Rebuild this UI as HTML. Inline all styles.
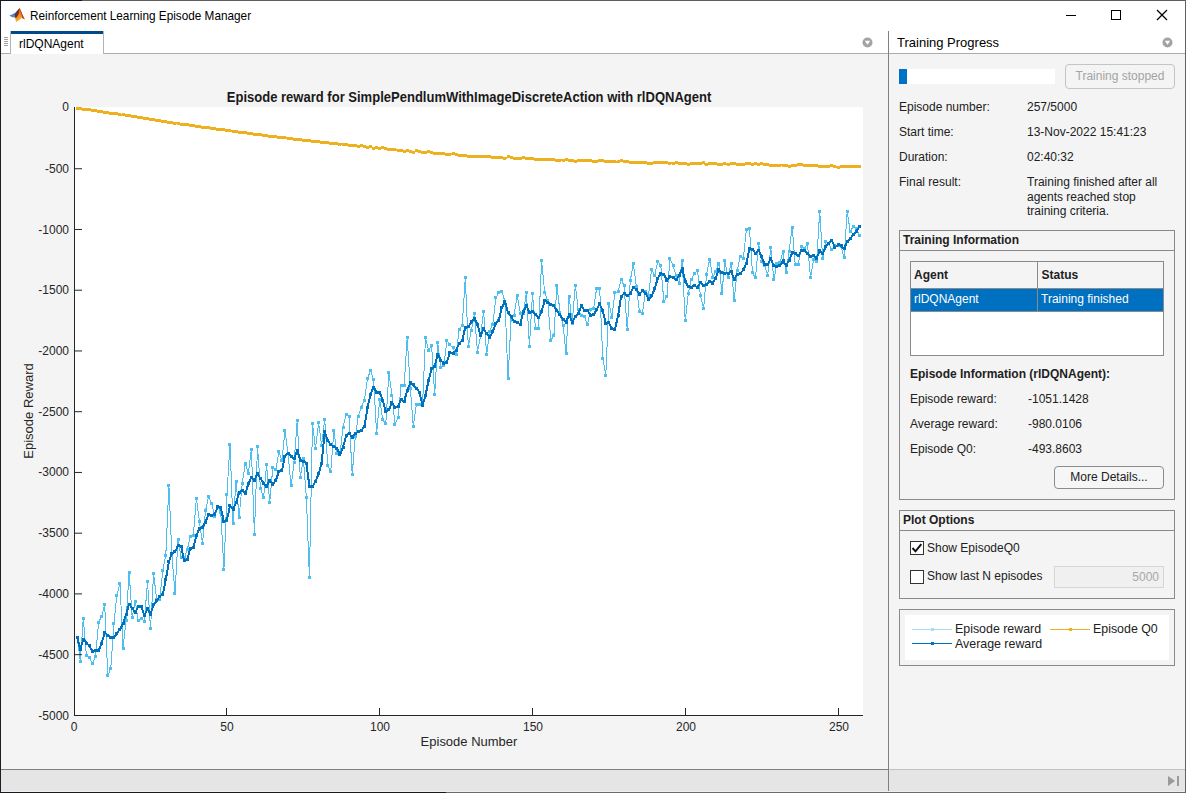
<!DOCTYPE html>
<html><head><meta charset="utf-8">
<style>
*{box-sizing:border-box}
html,body{margin:0;padding:0;width:1186px;height:793px;overflow:hidden;background:#f4f4f4;font-family:"Liberation Sans",sans-serif;color:#1a1a1a}
.a{position:absolute;white-space:nowrap}
#titlebar{position:absolute;left:0;top:0;width:1186px;height:31px;background:#fff}
.lbl{position:absolute;font-size:12px;line-height:14px;white-space:nowrap;color:#212121}
.panel{position:absolute;border:1px solid #8a8a8a}
.phdr{position:absolute;left:0;right:0;top:0;height:20px;border-bottom:1px solid #8a8a8a}
.btn{position:absolute;border:1px solid #8c8c8c;border-radius:4px;background:#f6f6f6;font-size:12px;text-align:center}
</style></head>
<body>
<!-- window border -->
<div class="a" style="left:0;top:0;width:1186px;height:793px;background:#f4f4f4"></div>
<div id="titlebar"></div>


<!-- title -->
<svg class="a" style="left:8px;top:6px" width="18" height="18" viewBox="0 0 18 18">
  <defs><linearGradient id="lg1" x1="0" y1="0" x2="0.3" y2="1"><stop offset="0" stop-color="#c8491d"/><stop offset="0.6" stop-color="#e98a2c"/><stop offset="1" stop-color="#f5bd2a"/></linearGradient></defs>
  <path d="M1.3 9.6 L4.5 8.3 L7.5 6.5 L10.3 3.6 L9.2 9.8 L7.2 11.6 L4.2 11.3 Z" fill="#3a8ede"/>
  <path d="M6.8 8.3 L11.6 1.9 L13 5 L14.6 9 L16.9 13.6 L13.6 11.8 L11.2 14 L8.2 16 L6.9 11.5 Z" fill="url(#lg1)"/>
  <path d="M6.8 8.3 L11.6 1.9 L10.6 8 L8.6 11.6 L6.9 11.5 Z" fill="#8c2312"/>
  <path d="M11.6 1.9 L13 5 L14.6 9 L16.9 13.6 L14.2 12 L13.2 8 Z" fill="#cc3a17"/>
  <path d="M7.3 8 L10.5 4.2 L9.2 7.5 L7.8 9.6 Z" fill="#2b4d6a"/>
</svg>
<div class="a" style="left:30px;top:8px;font-size:13px;line-height:15px;color:#000;transform:scaleX(0.905);transform-origin:0 0">Reinforcement Learning Episode Manager</div>
<!-- window controls -->
<div class="a" style="left:1066px;top:15px;width:10px;height:1px;background:#000"></div>
<div class="a" style="left:1111px;top:10px;width:10px;height:10px;border:1px solid #000"></div>
<svg class="a" style="left:1156px;top:9px" width="12" height="12" viewBox="0 0 12 12"><path d="M1 1 L11 11 M11 1 L1 11" stroke="#000" stroke-width="1.25"/></svg>

<!-- tab bar -->
<div class="a" style="left:1px;top:31px;width:887px;height:23px;background:#fff;border-bottom:1px solid #adadad"></div>
<div class="a" style="left:10px;top:31px;width:94px;height:23px;background:#fff;border-left:1px solid #b4b4b4;border-right:1px solid #b4b4b4"></div>
<div class="a" style="left:11px;top:31px;width:92px;height:3px;background:#004b87"></div>
<div class="a" style="left:19px;top:37px;font-size:12px;line-height:14px;color:#000">rlDQNAgent</div>
<div class="a" style="left:4px;top:37px;width:4px;height:9px;background:repeating-linear-gradient(#a0a0a0 0 1px,transparent 1px 2px)"></div>
<svg class="a" style="left:861.5px;top:36.6px" width="11" height="11" viewBox="0 0 11 11"><circle cx="5.5" cy="5.5" r="5" fill="#a3a3a3"/><path d="M2.8 3.8 L8.2 3.8 L5.5 7.8 Z" fill="#fff"/></svg>

<!-- divider -->
<div class="a" style="left:888px;top:31px;width:1px;height:762px;background:#808080"></div>

<!-- right header -->
<div class="a" style="left:889px;top:31px;width:296px;height:23px;background:#fff;border-bottom:1px solid #adadad"></div>
<div class="a" style="left:897px;top:35px;font-size:13px;line-height:15px;color:#000">Training Progress</div>
<svg class="a" style="left:1161.5px;top:36.8px" width="11" height="11" viewBox="0 0 11 11"><circle cx="5.5" cy="5.5" r="5" fill="#a3a3a3"/><path d="M2.8 3.8 L8.2 3.8 L5.5 7.8 Z" fill="#fff"/></svg>

<!-- status bar -->
<div class="a" style="left:1px;top:769px;width:1184px;height:23px;background:#e5e5e5;border-top:1px solid #808080"></div>
<div class="a" style="left:889px;top:769px;width:296px;height:1px;background:#c2c2c2"></div>
<div class="a" style="left:888px;top:769px;width:1px;height:24px;background:#808080"></div>

<!-- CHART -->
<svg class="a" style="left:0;top:0" width="1186" height="793" viewBox="0 0 1186 793">
<rect x="74" y="107" width="789" height="608" fill="#fff"/>
<g shape-rendering="crispEdges">
<polyline points="77.2,637.3 80.3,661.6 83.3,618.2 86.4,655.1 89.4,657.5 92.5,663.6 95.5,656.4 98.6,622.3 101.6,616.6 104.7,604.3 107.8,675.6 110.8,668.2 113.9,623.1 116.9,595.2 120.0,583.8 123.0,648.5 126.1,620.7 129.1,572.3 132.2,617.4 135.3,601.8 138.3,620.7 141.4,618.2 144.4,621.5 147.5,581.3 150.5,628.7 153.6,573.5 156.6,599.0 159.7,599.5 162.8,570.3 165.8,555.3 168.9,485.5 171.9,555.0 175.0,593.3 178.0,539.6 181.1,557.8 184.1,558.0 187.2,550.0 190.3,536.6 193.3,535.8 196.4,498.7 199.4,521.2 202.5,543.7 205.5,510.9 208.6,496.6 211.6,503.3 214.7,516.7 217.8,507.0 220.8,512.8 223.9,569.5 226.9,494.8 230.0,444.2 233.0,523.7 236.1,481.5 239.1,517.6 242.2,483.6 245.3,463.1 248.3,473.0 251.4,449.5 254.4,534.2 257.5,446.9 260.5,488.8 263.6,497.9 266.6,464.6 269.7,502.5 272.8,467.7 275.8,469.9 278.9,451.8 281.9,460.5 285.0,430.8 288.0,453.3 291.1,486.0 294.1,462.5 297.2,420.6 300.3,477.7 303.3,458.2 306.4,497.6 309.4,577.6 312.5,423.4 315.5,448.7 318.6,422.7 321.6,445.4 324.7,419.7 327.8,465.8 330.8,471.1 333.9,430.3 336.9,453.7 340.0,453.7 343.0,427.2 346.1,414.4 349.1,416.6 352.2,474.6 355.3,436.3 358.3,416.6 361.4,407.0 364.4,400.2 367.5,378.4 370.5,370.8 373.6,379.2 376.6,433.6 379.7,399.6 382.8,420.0 385.8,423.8 388.9,372.4 391.9,395.0 395.0,424.6 398.0,417.4 401.1,386.0 404.1,386.0 407.2,337.3 410.3,388.2 413.3,426.5 416.4,404.1 419.4,404.1 422.5,405.0 425.5,337.6 428.6,350.4 431.6,345.9 434.7,394.3 437.8,342.9 440.8,367.8 443.9,365.0 446.9,340.4 450.0,344.9 453.0,347.7 456.1,354.6 459.1,329.6 462.2,325.8 465.3,277.9 468.3,346.2 471.4,330.3 474.4,314.0 477.5,352.3 480.5,336.0 483.6,311.4 486.6,354.6 489.7,331.1 492.8,324.3 495.8,297.8 498.9,292.5 501.9,291.8 505.0,301.6 508.0,378.8 511.1,320.0 514.1,315.2 517.2,295.6 520.3,313.0 523.3,313.0 526.4,292.5 529.4,346.2 532.5,294.0 535.5,328.1 538.6,328.1 541.6,260.8 544.7,292.5 547.8,300.8 550.8,340.2 553.9,335.6 556.9,285.0 560.0,312.2 563.0,325.0 566.1,353.8 569.1,296.3 572.2,323.5 575.3,285.0 578.3,309.9 581.4,315.2 584.4,316.7 587.5,324.3 590.5,309.9 593.6,308.4 596.6,288.7 599.7,288.7 602.8,358.3 605.8,375.0 608.9,303.1 611.9,317.2 615.0,292.2 618.0,292.0 621.1,279.2 624.1,286.0 627.2,329.8 630.3,280.7 633.3,263.0 636.4,286.7 639.4,311.0 642.5,313.2 645.5,291.3 648.6,295.0 651.6,269.0 654.7,275.4 657.8,261.0 660.8,265.6 663.9,301.9 666.9,296.6 670.0,258.7 673.0,265.6 676.1,275.4 679.1,283.7 682.2,260.3 685.2,320.8 688.3,293.5 691.4,279.2 694.4,273.1 697.5,270.6 700.5,296.0 703.6,308.3 706.6,274.3 709.7,259.2 712.7,277.3 715.8,272.0 718.9,263.0 721.9,293.2 725.0,260.7 728.0,278.0 731.1,263.0 734.1,300.8 737.2,270.5 740.2,256.9 743.3,258.4 746.4,229.7 749.4,228.2 752.5,272.8 755.5,278.0 758.6,243.0 761.6,261.4 764.7,266.0 767.7,275.0 770.8,247.8 773.9,279.8 776.9,263.0 780.0,262.2 783.0,252.0 786.1,272.2 789.1,251.0 792.2,227.1 795.2,264.6 798.3,264.6 801.4,246.4 804.4,248.7 807.5,243.7 810.5,277.9 813.6,260.0 816.6,261.6 819.7,211.5 822.7,258.2 825.8,241.1 828.9,243.4 831.9,249.5 835.0,245.0 838.0,245.7 841.1,246.4 844.1,257.8 847.2,211.6 850.2,231.3 853.3,226.6 856.4,228.3 859.4,235.1" fill="none" stroke="#4DBEEE" stroke-width="1"/>
<path d="M76 636h3v3h-3zM79 660h3v3h-3zM82 617h3v3h-3zM85 654h3v3h-3zM88 656h3v3h-3zM91 662h3v3h-3zM94 655h3v3h-3zM97 621h3v3h-3zM100 615h3v3h-3zM103 603h3v3h-3zM106 674h3v3h-3zM109 667h3v3h-3zM112 622h3v3h-3zM115 594h3v3h-3zM118 582h3v3h-3zM122 647h3v3h-3zM125 619h3v3h-3zM128 571h3v3h-3zM131 616h3v3h-3zM134 600h3v3h-3zM137 619h3v3h-3zM140 617h3v3h-3zM143 620h3v3h-3zM146 580h3v3h-3zM149 627h3v3h-3zM152 572h3v3h-3zM155 598h3v3h-3zM158 598h3v3h-3zM161 569h3v3h-3zM164 554h3v3h-3zM167 484h3v3h-3zM170 554h3v3h-3zM173 592h3v3h-3zM177 538h3v3h-3zM180 556h3v3h-3zM183 556h3v3h-3zM186 548h3v3h-3zM189 535h3v3h-3zM192 534h3v3h-3zM195 497h3v3h-3zM198 520h3v3h-3zM201 542h3v3h-3zM204 509h3v3h-3zM207 495h3v3h-3zM210 502h3v3h-3zM213 515h3v3h-3zM216 506h3v3h-3zM219 511h3v3h-3zM222 568h3v3h-3zM225 493h3v3h-3zM228 443h3v3h-3zM232 522h3v3h-3zM235 480h3v3h-3zM238 516h3v3h-3zM241 482h3v3h-3zM244 462h3v3h-3zM247 472h3v3h-3zM250 448h3v3h-3zM253 533h3v3h-3zM256 445h3v3h-3zM259 487h3v3h-3zM262 496h3v3h-3zM265 463h3v3h-3zM268 501h3v3h-3zM271 466h3v3h-3zM274 468h3v3h-3zM277 450h3v3h-3zM280 459h3v3h-3zM283 429h3v3h-3zM287 452h3v3h-3zM290 484h3v3h-3zM293 461h3v3h-3zM296 419h3v3h-3zM299 476h3v3h-3zM302 457h3v3h-3zM305 496h3v3h-3zM308 576h3v3h-3zM311 422h3v3h-3zM314 447h3v3h-3zM317 421h3v3h-3zM320 444h3v3h-3zM323 418h3v3h-3zM326 464h3v3h-3zM329 470h3v3h-3zM332 429h3v3h-3zM335 452h3v3h-3zM338 452h3v3h-3zM342 426h3v3h-3zM345 413h3v3h-3zM348 415h3v3h-3zM351 473h3v3h-3zM354 435h3v3h-3zM357 415h3v3h-3zM360 406h3v3h-3zM363 399h3v3h-3zM366 377h3v3h-3zM369 369h3v3h-3zM372 378h3v3h-3zM375 432h3v3h-3zM378 398h3v3h-3zM381 418h3v3h-3zM384 422h3v3h-3zM387 371h3v3h-3zM390 394h3v3h-3zM393 423h3v3h-3zM397 416h3v3h-3zM400 384h3v3h-3zM403 384h3v3h-3zM406 336h3v3h-3zM409 387h3v3h-3zM412 425h3v3h-3zM415 403h3v3h-3zM418 403h3v3h-3zM421 404h3v3h-3zM424 336h3v3h-3zM427 349h3v3h-3zM430 344h3v3h-3zM433 393h3v3h-3zM436 341h3v3h-3zM439 366h3v3h-3zM442 364h3v3h-3zM445 339h3v3h-3zM448 343h3v3h-3zM452 346h3v3h-3zM455 353h3v3h-3zM458 328h3v3h-3zM461 324h3v3h-3zM464 276h3v3h-3zM467 345h3v3h-3zM470 329h3v3h-3zM473 312h3v3h-3zM476 351h3v3h-3zM479 334h3v3h-3zM482 310h3v3h-3zM485 353h3v3h-3zM488 330h3v3h-3zM491 323h3v3h-3zM494 296h3v3h-3zM497 291h3v3h-3zM500 290h3v3h-3zM503 300h3v3h-3zM507 377h3v3h-3zM510 318h3v3h-3zM513 314h3v3h-3zM516 294h3v3h-3zM519 312h3v3h-3zM522 312h3v3h-3zM525 291h3v3h-3zM528 345h3v3h-3zM531 292h3v3h-3zM534 327h3v3h-3zM537 327h3v3h-3zM540 259h3v3h-3zM543 291h3v3h-3zM546 299h3v3h-3zM549 339h3v3h-3zM552 334h3v3h-3zM555 284h3v3h-3zM558 311h3v3h-3zM562 324h3v3h-3zM565 352h3v3h-3zM568 295h3v3h-3zM571 322h3v3h-3zM574 284h3v3h-3zM577 308h3v3h-3zM580 314h3v3h-3zM583 315h3v3h-3zM586 323h3v3h-3zM589 308h3v3h-3zM592 307h3v3h-3zM595 287h3v3h-3zM598 287h3v3h-3zM601 357h3v3h-3zM604 374h3v3h-3zM607 302h3v3h-3zM610 316h3v3h-3zM613 291h3v3h-3zM617 290h3v3h-3zM620 278h3v3h-3zM623 284h3v3h-3zM626 328h3v3h-3zM629 279h3v3h-3zM632 262h3v3h-3zM635 285h3v3h-3zM638 310h3v3h-3zM641 312h3v3h-3zM644 290h3v3h-3zM647 294h3v3h-3zM650 268h3v3h-3zM653 274h3v3h-3zM656 260h3v3h-3zM659 264h3v3h-3zM662 300h3v3h-3zM665 295h3v3h-3zM668 257h3v3h-3zM672 264h3v3h-3zM675 274h3v3h-3zM678 282h3v3h-3zM681 259h3v3h-3zM684 319h3v3h-3zM687 292h3v3h-3zM690 278h3v3h-3zM693 272h3v3h-3zM696 269h3v3h-3zM699 294h3v3h-3zM702 307h3v3h-3zM705 273h3v3h-3zM708 258h3v3h-3zM711 276h3v3h-3zM714 270h3v3h-3zM717 262h3v3h-3zM720 292h3v3h-3zM723 259h3v3h-3zM727 276h3v3h-3zM730 262h3v3h-3zM733 299h3v3h-3zM736 269h3v3h-3zM739 255h3v3h-3zM742 257h3v3h-3zM745 228h3v3h-3zM748 227h3v3h-3zM751 271h3v3h-3zM754 276h3v3h-3zM757 242h3v3h-3zM760 260h3v3h-3zM763 264h3v3h-3zM766 274h3v3h-3zM769 246h3v3h-3zM772 278h3v3h-3zM775 262h3v3h-3zM778 261h3v3h-3zM782 250h3v3h-3zM785 271h3v3h-3zM788 250h3v3h-3zM791 226h3v3h-3zM794 263h3v3h-3zM797 263h3v3h-3zM800 245h3v3h-3zM803 247h3v3h-3zM806 242h3v3h-3zM809 276h3v3h-3zM812 258h3v3h-3zM815 260h3v3h-3zM818 210h3v3h-3zM821 257h3v3h-3zM824 240h3v3h-3zM827 242h3v3h-3zM830 248h3v3h-3zM833 244h3v3h-3zM837 244h3v3h-3zM840 245h3v3h-3zM843 256h3v3h-3zM846 210h3v3h-3zM849 230h3v3h-3zM852 225h3v3h-3zM855 227h3v3h-3zM858 234h3v3h-3z" fill="#4DBEEE"/>
<polyline points="77.2,637.3 80.3,649.5 83.3,639.0 86.4,643.0 89.4,645.9 92.5,651.2 95.5,650.2 98.6,651.0 101.6,643.3 104.7,632.6 107.8,635.0 110.8,637.4 113.9,637.6 116.9,633.3 120.0,629.2 123.0,623.8 126.1,614.3 129.1,604.1 132.2,608.5 135.3,612.1 138.3,606.6 141.4,606.1 144.4,615.9 147.5,608.7 150.5,614.1 153.6,604.6 156.6,600.8 159.7,596.4 162.8,594.2 165.8,579.5 168.9,561.9 171.9,553.1 175.0,551.9 178.0,545.7 181.1,546.2 184.1,560.7 187.2,559.7 190.3,548.4 193.3,547.6 196.4,535.8 199.4,528.5 202.5,527.2 205.5,522.1 208.6,514.2 211.6,515.1 214.7,514.2 217.8,506.9 220.8,507.3 223.9,521.9 226.9,520.2 230.0,505.7 233.0,509.0 236.1,502.7 239.1,492.4 242.2,490.1 245.3,493.9 248.3,483.8 251.4,477.4 254.4,480.7 257.5,473.3 260.5,478.5 263.6,483.5 266.6,486.5 269.7,480.1 272.8,484.3 275.8,480.5 278.9,471.3 281.9,470.5 285.0,456.1 288.0,453.3 291.1,456.5 294.1,458.6 297.2,450.6 300.3,460.0 303.3,461.0 306.4,463.3 309.4,486.3 312.5,486.9 315.5,481.1 318.6,474.0 321.6,463.6 324.7,432.0 327.8,440.5 330.8,444.9 333.9,446.5 336.9,448.1 340.0,454.9 343.0,447.2 346.1,435.9 349.1,433.1 352.2,437.3 355.3,433.8 358.3,431.7 361.4,430.2 364.4,426.9 367.5,407.7 370.5,394.6 373.6,387.1 376.6,392.4 379.7,392.3 382.8,400.6 385.8,411.2 388.9,409.9 391.9,402.2 395.0,407.2 398.0,406.6 401.1,399.1 404.1,401.8 407.2,390.3 410.3,383.0 413.3,384.8 416.4,388.4 419.4,392.0 422.5,405.6 425.5,395.5 428.6,380.2 431.6,368.6 434.7,366.6 437.8,354.2 440.8,360.3 443.9,363.2 446.9,362.1 450.0,352.2 453.0,353.2 456.1,350.5 459.1,343.4 462.2,340.5 465.3,327.1 468.3,326.8 471.4,322.0 474.4,318.8 477.5,324.1 480.5,335.8 483.6,328.8 486.6,333.7 489.7,337.1 492.8,331.5 495.8,323.8 498.9,320.1 501.9,307.5 505.0,301.6 508.0,312.5 511.1,316.9 514.1,321.5 517.2,322.2 520.3,324.5 523.3,311.4 526.4,305.9 529.4,312.1 532.5,311.7 535.5,314.8 538.6,317.8 541.6,311.4 544.7,300.7 547.8,302.1 550.8,304.5 553.9,306.0 556.9,310.8 560.0,314.8 563.0,319.6 566.1,322.3 569.1,314.5 572.2,322.2 575.3,316.7 578.3,313.7 581.4,306.0 584.4,310.1 587.5,310.2 590.5,315.2 593.6,314.9 596.6,309.6 599.7,304.0 602.8,310.8 605.8,323.8 608.9,322.8 611.9,328.5 615.0,329.2 618.0,315.9 621.1,296.7 624.1,293.3 627.2,295.8 630.3,293.5 633.3,287.7 636.4,289.2 639.4,294.2 642.5,290.9 645.5,293.0 648.6,299.4 651.6,295.9 654.7,288.8 657.8,278.3 660.8,273.2 663.9,274.6 666.9,280.1 670.0,276.8 673.0,277.7 676.1,279.6 679.1,276.0 682.2,268.7 685.2,281.2 688.3,286.7 691.4,287.5 694.4,285.4 697.5,287.4 700.5,282.5 703.6,285.4 706.6,284.5 709.7,281.7 712.7,283.0 715.8,278.2 718.9,269.2 721.9,272.9 725.0,273.2 728.0,273.4 731.1,271.6 734.1,279.1 737.2,274.6 740.2,273.8 743.3,269.9 746.4,263.3 749.4,248.7 752.5,249.2 755.5,253.4 758.6,250.3 761.6,256.7 764.7,264.2 767.7,264.7 770.8,258.6 773.9,266.0 776.9,266.3 780.0,265.6 783.0,261.0 786.1,265.8 789.1,260.1 792.2,252.9 795.2,253.4 798.3,255.9 801.4,250.7 804.4,250.3 807.5,253.6 810.5,256.3 813.6,255.3 816.6,258.4 819.7,250.9 822.7,253.8 825.8,246.5 828.9,243.2 831.9,240.7 835.0,247.4 838.0,244.9 841.1,246.0 844.1,248.9 847.2,241.3 850.2,238.6 853.3,234.7 856.4,231.1 859.4,226.6" fill="none" stroke="#0072BD" stroke-width="2" stroke-linejoin="round"/>
<path d="M76 636h3v3h-3zM79 648h3v3h-3zM82 638h3v3h-3zM85 642h3v3h-3zM88 644h3v3h-3zM91 650h3v3h-3zM94 649h3v3h-3zM97 649h3v3h-3zM100 642h3v3h-3zM103 631h3v3h-3zM106 634h3v3h-3zM109 636h3v3h-3zM112 636h3v3h-3zM115 632h3v3h-3zM118 628h3v3h-3zM122 622h3v3h-3zM125 613h3v3h-3zM128 603h3v3h-3zM131 607h3v3h-3zM134 611h3v3h-3zM137 605h3v3h-3zM140 605h3v3h-3zM143 614h3v3h-3zM146 607h3v3h-3zM149 613h3v3h-3zM152 603h3v3h-3zM155 599h3v3h-3zM158 595h3v3h-3zM161 593h3v3h-3zM164 578h3v3h-3zM167 560h3v3h-3zM170 552h3v3h-3zM173 550h3v3h-3zM177 544h3v3h-3zM180 545h3v3h-3zM183 559h3v3h-3zM186 558h3v3h-3zM189 547h3v3h-3zM192 546h3v3h-3zM195 534h3v3h-3zM198 527h3v3h-3zM201 526h3v3h-3zM204 521h3v3h-3zM207 513h3v3h-3zM210 514h3v3h-3zM213 513h3v3h-3zM216 505h3v3h-3zM219 506h3v3h-3zM222 520h3v3h-3zM225 519h3v3h-3zM228 504h3v3h-3zM232 508h3v3h-3zM235 501h3v3h-3zM238 491h3v3h-3zM241 489h3v3h-3zM244 492h3v3h-3zM247 482h3v3h-3zM250 476h3v3h-3zM253 479h3v3h-3zM256 472h3v3h-3zM259 477h3v3h-3zM262 482h3v3h-3zM265 485h3v3h-3zM268 479h3v3h-3zM271 483h3v3h-3zM274 479h3v3h-3zM277 470h3v3h-3zM280 469h3v3h-3zM283 455h3v3h-3zM287 452h3v3h-3zM290 455h3v3h-3zM293 457h3v3h-3zM296 449h3v3h-3zM299 459h3v3h-3zM302 460h3v3h-3zM305 462h3v3h-3zM308 485h3v3h-3zM311 485h3v3h-3zM314 480h3v3h-3zM317 472h3v3h-3zM320 462h3v3h-3zM323 430h3v3h-3zM326 439h3v3h-3zM329 443h3v3h-3zM332 445h3v3h-3zM335 447h3v3h-3zM338 453h3v3h-3zM342 446h3v3h-3zM345 434h3v3h-3zM348 432h3v3h-3zM351 436h3v3h-3zM354 432h3v3h-3zM357 430h3v3h-3zM360 429h3v3h-3zM363 425h3v3h-3zM366 406h3v3h-3zM369 393h3v3h-3zM372 386h3v3h-3zM375 391h3v3h-3zM378 391h3v3h-3zM381 399h3v3h-3zM384 410h3v3h-3zM387 408h3v3h-3zM390 401h3v3h-3zM393 406h3v3h-3zM397 405h3v3h-3zM400 398h3v3h-3zM403 400h3v3h-3zM406 389h3v3h-3zM409 381h3v3h-3zM412 383h3v3h-3zM415 387h3v3h-3zM418 391h3v3h-3zM421 404h3v3h-3zM424 394h3v3h-3zM427 379h3v3h-3zM430 367h3v3h-3zM433 365h3v3h-3zM436 353h3v3h-3zM439 359h3v3h-3zM442 362h3v3h-3zM445 361h3v3h-3zM448 351h3v3h-3zM452 352h3v3h-3zM455 349h3v3h-3zM458 342h3v3h-3zM461 339h3v3h-3zM464 326h3v3h-3zM467 325h3v3h-3zM470 320h3v3h-3zM473 317h3v3h-3zM476 323h3v3h-3zM479 334h3v3h-3zM482 327h3v3h-3zM485 332h3v3h-3zM488 336h3v3h-3zM491 330h3v3h-3zM494 322h3v3h-3zM497 319h3v3h-3zM500 306h3v3h-3zM503 300h3v3h-3zM507 311h3v3h-3zM510 315h3v3h-3zM513 320h3v3h-3zM516 321h3v3h-3zM519 323h3v3h-3zM522 310h3v3h-3zM525 304h3v3h-3zM528 311h3v3h-3zM531 310h3v3h-3zM534 313h3v3h-3zM537 316h3v3h-3zM540 310h3v3h-3zM543 299h3v3h-3zM546 301h3v3h-3zM549 303h3v3h-3zM552 304h3v3h-3zM555 309h3v3h-3zM558 313h3v3h-3zM562 318h3v3h-3zM565 321h3v3h-3zM568 313h3v3h-3zM571 321h3v3h-3zM574 315h3v3h-3zM577 312h3v3h-3zM580 304h3v3h-3zM583 309h3v3h-3zM586 309h3v3h-3zM589 314h3v3h-3zM592 313h3v3h-3zM595 308h3v3h-3zM598 302h3v3h-3zM601 309h3v3h-3zM604 322h3v3h-3zM607 321h3v3h-3zM610 327h3v3h-3zM613 328h3v3h-3zM617 314h3v3h-3zM620 295h3v3h-3zM623 292h3v3h-3zM626 294h3v3h-3zM629 292h3v3h-3zM632 286h3v3h-3zM635 288h3v3h-3zM638 293h3v3h-3zM641 289h3v3h-3zM644 292h3v3h-3zM647 298h3v3h-3zM650 294h3v3h-3zM653 287h3v3h-3zM656 277h3v3h-3zM659 272h3v3h-3zM662 273h3v3h-3zM665 279h3v3h-3zM668 275h3v3h-3zM672 276h3v3h-3zM675 278h3v3h-3zM678 274h3v3h-3zM681 267h3v3h-3zM684 280h3v3h-3zM687 285h3v3h-3zM690 286h3v3h-3zM693 284h3v3h-3zM696 286h3v3h-3zM699 281h3v3h-3zM702 284h3v3h-3zM705 283h3v3h-3zM708 280h3v3h-3zM711 282h3v3h-3zM714 277h3v3h-3zM717 268h3v3h-3zM720 271h3v3h-3zM723 272h3v3h-3zM727 272h3v3h-3zM730 270h3v3h-3zM733 278h3v3h-3zM736 273h3v3h-3zM739 272h3v3h-3zM742 268h3v3h-3zM745 262h3v3h-3zM748 247h3v3h-3zM751 248h3v3h-3zM754 252h3v3h-3zM757 249h3v3h-3zM760 255h3v3h-3zM763 263h3v3h-3zM766 263h3v3h-3zM769 257h3v3h-3zM772 264h3v3h-3zM775 265h3v3h-3zM778 264h3v3h-3zM782 259h3v3h-3zM785 264h3v3h-3zM788 259h3v3h-3zM791 251h3v3h-3zM794 252h3v3h-3zM797 254h3v3h-3zM800 249h3v3h-3zM803 249h3v3h-3zM806 252h3v3h-3zM809 255h3v3h-3zM812 254h3v3h-3zM815 257h3v3h-3zM818 249h3v3h-3zM821 252h3v3h-3zM824 245h3v3h-3zM827 242h3v3h-3zM830 239h3v3h-3zM833 246h3v3h-3zM837 243h3v3h-3zM840 244h3v3h-3zM843 247h3v3h-3zM846 240h3v3h-3zM849 237h3v3h-3zM852 233h3v3h-3zM855 230h3v3h-3zM858 225h3v3h-3z" fill="#0072BD"/>
<polyline points="77.2,108.2 80.3,108.7 83.3,109.1 86.4,109.5 89.4,110.0 92.5,110.4 95.5,110.9 98.6,111.3 101.6,111.7 104.7,112.2 107.8,112.6 110.8,113.1 113.9,113.5 116.9,114.0 120.0,114.4 123.0,114.9 126.1,115.4 129.1,115.9 132.2,116.4 135.3,116.9 138.3,117.4 141.4,117.9 144.4,118.4 147.5,118.9 150.5,119.4 153.6,119.9 156.6,120.4 159.7,120.9 162.8,121.4 165.8,121.9 168.9,122.4 171.9,122.8 175.0,123.2 178.0,123.7 181.1,124.1 184.1,124.5 187.2,124.9 190.3,125.3 193.3,125.7 196.4,126.2 199.4,126.6 202.5,127.0 205.5,127.4 208.6,127.8 211.6,128.3 214.7,128.7 217.8,129.1 220.8,129.5 223.9,129.9 226.9,130.3 230.0,130.8 233.0,131.2 236.1,131.6 239.1,132.0 242.2,132.4 245.3,132.8 248.3,133.3 251.4,133.7 254.4,134.1 257.5,134.5 260.5,134.9 263.6,135.4 266.6,135.8 269.7,136.2 272.8,136.6 275.8,136.9 278.9,137.3 281.9,137.6 285.0,138.0 288.0,138.3 291.1,138.7 294.1,139.0 297.2,139.4 300.3,139.7 303.3,140.0 306.4,140.4 309.4,140.7 312.5,141.1 315.5,141.4 318.6,141.8 321.6,142.1 324.7,142.5 327.8,142.8 330.8,143.2 333.9,143.5 336.9,143.9 340.0,144.2 343.0,144.5 346.1,144.9 349.1,145.2 352.2,145.6 355.3,145.9 358.3,146.3 361.4,145.7 364.4,147.0 367.5,147.3 370.5,146.8 373.6,148.0 376.6,147.4 379.7,148.5 382.8,147.9 385.8,148.1 388.9,149.3 391.9,149.6 395.0,149.8 398.0,150.1 401.1,150.3 404.1,151.5 407.2,150.9 410.3,151.1 413.3,152.3 416.4,150.7 419.4,151.9 422.5,152.1 425.5,152.4 428.6,151.8 431.6,152.9 434.7,153.2 437.8,153.4 440.8,153.7 443.9,154.0 446.9,154.2 450.0,154.5 453.0,153.8 456.1,154.1 459.1,155.3 462.2,155.5 465.3,155.8 468.3,156.0 471.4,156.2 474.4,156.3 477.5,156.4 480.5,156.6 483.6,156.7 486.6,156.8 489.7,157.0 492.8,157.1 495.8,157.2 498.9,157.4 501.9,157.5 505.0,158.6 508.0,156.9 511.1,157.9 514.1,158.1 517.2,158.2 520.3,158.3 523.3,157.6 526.4,158.6 529.4,158.8 532.5,158.9 535.5,159.0 538.6,159.2 541.6,159.3 544.7,159.4 547.8,159.6 550.8,159.7 553.9,159.9 556.9,160.9 560.0,160.1 563.0,160.3 566.1,159.5 569.1,160.5 572.2,160.6 575.3,161.5 578.3,160.7 581.4,160.8 584.4,160.9 587.5,161.0 590.5,160.1 593.6,161.1 596.6,161.2 599.7,160.4 602.8,160.4 605.8,161.4 608.9,161.5 611.9,161.6 615.0,161.7 618.0,161.7 621.1,160.9 624.1,161.9 627.2,162.0 630.3,163.0 633.3,162.1 636.4,162.2 639.4,162.3 642.5,162.4 645.5,162.4 648.6,163.4 651.6,163.5 654.7,162.7 657.8,162.8 660.8,162.8 663.9,162.9 666.9,163.0 670.0,163.1 673.0,163.1 676.1,162.3 679.1,163.2 682.2,163.3 685.2,163.4 688.3,164.3 691.4,163.5 694.4,163.5 697.5,163.6 700.5,163.7 703.6,162.8 706.6,164.7 709.7,163.8 712.7,163.9 715.8,164.0 718.9,164.0 721.9,164.1 725.0,163.2 728.0,164.2 731.1,163.4 734.1,163.4 737.2,164.4 740.2,164.4 743.3,164.5 746.4,163.7 749.4,163.7 752.5,164.7 755.5,163.8 758.6,164.8 761.6,164.0 764.7,164.9 767.7,165.0 770.8,165.0 773.9,165.1 776.9,165.2 780.0,165.2 783.0,165.3 786.1,165.3 789.1,166.3 792.2,165.5 795.2,165.5 798.3,164.7 801.4,164.7 804.4,165.7 807.5,165.8 810.5,165.8 813.6,165.9 816.6,165.0 819.7,166.9 822.7,166.1 825.8,166.1 828.9,166.2 831.9,165.3 835.0,166.3 838.0,167.3 841.1,166.4 844.1,166.5 847.2,166.5 850.2,166.6 853.3,166.7 856.4,166.7 859.4,166.8" fill="none" stroke="#EDB120" stroke-width="2"/>
<path d="M76 107h3v3h-3zM79 107h3v3h-3zM82 108h3v3h-3zM85 108h3v3h-3zM88 108h3v3h-3zM91 109h3v3h-3zM94 109h3v3h-3zM97 110h3v3h-3zM100 110h3v3h-3zM103 111h3v3h-3zM106 111h3v3h-3zM109 112h3v3h-3zM112 112h3v3h-3zM115 112h3v3h-3zM118 113h3v3h-3zM122 113h3v3h-3zM125 114h3v3h-3zM128 114h3v3h-3zM131 115h3v3h-3zM134 115h3v3h-3zM137 116h3v3h-3zM140 116h3v3h-3zM143 117h3v3h-3zM146 117h3v3h-3zM149 118h3v3h-3zM152 118h3v3h-3zM155 119h3v3h-3zM158 119h3v3h-3zM161 120h3v3h-3zM164 120h3v3h-3zM167 121h3v3h-3zM170 121h3v3h-3zM173 122h3v3h-3zM177 122h3v3h-3zM180 123h3v3h-3zM183 123h3v3h-3zM186 123h3v3h-3zM189 124h3v3h-3zM192 124h3v3h-3zM195 125h3v3h-3zM198 125h3v3h-3zM201 126h3v3h-3zM204 126h3v3h-3zM207 126h3v3h-3zM210 127h3v3h-3zM213 127h3v3h-3zM216 128h3v3h-3zM219 128h3v3h-3zM222 128h3v3h-3zM225 129h3v3h-3zM228 129h3v3h-3zM232 130h3v3h-3zM235 130h3v3h-3zM238 131h3v3h-3zM241 131h3v3h-3zM244 131h3v3h-3zM247 132h3v3h-3zM250 132h3v3h-3zM253 133h3v3h-3zM256 133h3v3h-3zM259 133h3v3h-3zM262 134h3v3h-3zM265 134h3v3h-3zM268 135h3v3h-3zM271 135h3v3h-3zM274 135h3v3h-3zM277 136h3v3h-3zM280 136h3v3h-3zM283 136h3v3h-3zM287 137h3v3h-3zM290 137h3v3h-3zM293 138h3v3h-3zM296 138h3v3h-3zM299 138h3v3h-3zM302 139h3v3h-3zM305 139h3v3h-3zM308 139h3v3h-3zM311 140h3v3h-3zM314 140h3v3h-3zM317 140h3v3h-3zM320 141h3v3h-3zM323 141h3v3h-3zM326 141h3v3h-3zM329 142h3v3h-3zM332 142h3v3h-3zM335 142h3v3h-3zM338 143h3v3h-3zM342 143h3v3h-3zM345 143h3v3h-3zM348 144h3v3h-3zM351 144h3v3h-3zM354 144h3v3h-3zM357 145h3v3h-3zM360 144h3v3h-3zM363 145h3v3h-3zM366 146h3v3h-3zM369 145h3v3h-3zM372 147h3v3h-3zM375 146h3v3h-3zM378 147h3v3h-3zM381 146h3v3h-3zM384 147h3v3h-3zM387 148h3v3h-3zM390 148h3v3h-3zM393 148h3v3h-3zM397 149h3v3h-3zM400 149h3v3h-3zM403 150h3v3h-3zM406 149h3v3h-3zM409 150h3v3h-3zM412 151h3v3h-3zM415 149h3v3h-3zM418 150h3v3h-3zM421 151h3v3h-3zM424 151h3v3h-3zM427 150h3v3h-3zM430 151h3v3h-3zM433 152h3v3h-3zM436 152h3v3h-3zM439 152h3v3h-3zM442 152h3v3h-3zM445 153h3v3h-3zM448 153h3v3h-3zM452 152h3v3h-3zM455 153h3v3h-3zM458 154h3v3h-3zM461 154h3v3h-3zM464 154h3v3h-3zM467 155h3v3h-3zM470 155h3v3h-3zM473 155h3v3h-3zM476 155h3v3h-3zM479 155h3v3h-3zM482 155h3v3h-3zM485 155h3v3h-3zM488 155h3v3h-3zM491 156h3v3h-3zM494 156h3v3h-3zM497 156h3v3h-3zM500 156h3v3h-3zM503 157h3v3h-3zM507 155h3v3h-3zM510 156h3v3h-3zM513 157h3v3h-3zM516 157h3v3h-3zM519 157h3v3h-3zM522 156h3v3h-3zM525 157h3v3h-3zM528 157h3v3h-3zM531 157h3v3h-3zM534 158h3v3h-3zM537 158h3v3h-3zM540 158h3v3h-3zM543 158h3v3h-3zM546 158h3v3h-3zM549 158h3v3h-3zM552 158h3v3h-3zM555 159h3v3h-3zM558 159h3v3h-3zM562 159h3v3h-3zM565 158h3v3h-3zM568 159h3v3h-3zM571 159h3v3h-3zM574 160h3v3h-3zM577 159h3v3h-3zM580 159h3v3h-3zM583 159h3v3h-3zM586 159h3v3h-3zM589 159h3v3h-3zM592 160h3v3h-3zM595 160h3v3h-3zM598 159h3v3h-3zM601 159h3v3h-3zM604 160h3v3h-3zM607 160h3v3h-3zM610 160h3v3h-3zM613 160h3v3h-3zM617 160h3v3h-3zM620 159h3v3h-3zM623 160h3v3h-3zM626 160h3v3h-3zM629 161h3v3h-3zM632 161h3v3h-3zM635 161h3v3h-3zM638 161h3v3h-3zM641 161h3v3h-3zM644 161h3v3h-3zM647 162h3v3h-3zM650 162h3v3h-3zM653 161h3v3h-3zM656 161h3v3h-3zM659 161h3v3h-3zM662 161h3v3h-3zM665 161h3v3h-3zM668 162h3v3h-3zM672 162h3v3h-3zM675 161h3v3h-3zM678 162h3v3h-3zM681 162h3v3h-3zM684 162h3v3h-3zM687 163h3v3h-3zM690 162h3v3h-3zM693 162h3v3h-3zM696 162h3v3h-3zM699 162h3v3h-3zM702 161h3v3h-3zM705 163h3v3h-3zM708 162h3v3h-3zM711 162h3v3h-3zM714 162h3v3h-3zM717 163h3v3h-3zM720 163h3v3h-3zM723 162h3v3h-3zM727 163h3v3h-3zM730 162h3v3h-3zM733 162h3v3h-3zM736 163h3v3h-3zM739 163h3v3h-3zM742 163h3v3h-3zM745 162h3v3h-3zM748 162h3v3h-3zM751 163h3v3h-3zM754 162h3v3h-3zM757 163h3v3h-3zM760 162h3v3h-3zM763 163h3v3h-3zM766 163h3v3h-3zM769 164h3v3h-3zM772 164h3v3h-3zM775 164h3v3h-3zM778 164h3v3h-3zM782 164h3v3h-3zM785 164h3v3h-3zM788 165h3v3h-3zM791 164h3v3h-3zM794 164h3v3h-3zM797 163h3v3h-3zM800 163h3v3h-3zM803 164h3v3h-3zM806 164h3v3h-3zM809 164h3v3h-3zM812 164h3v3h-3zM815 164h3v3h-3zM818 165h3v3h-3zM821 165h3v3h-3zM824 165h3v3h-3zM827 165h3v3h-3zM830 164h3v3h-3zM833 165h3v3h-3zM837 166h3v3h-3zM840 165h3v3h-3zM843 165h3v3h-3zM846 165h3v3h-3zM849 165h3v3h-3zM852 165h3v3h-3zM855 165h3v3h-3zM858 165h3v3h-3z" fill="#EDB120"/>
</g>
<g shape-rendering="crispEdges" fill="#262626">
<rect x="74" y="107" width="1" height="609"/>
<rect x="74" y="715" width="789" height="1"/>
<rect x="226" y="708" width="1" height="7"/>
<rect x="379" y="708" width="1" height="7"/>
<rect x="532" y="708" width="1" height="7"/>
<rect x="685" y="708" width="1" height="7"/>
<rect x="838" y="708" width="1" height="7"/>
</g>
<g stroke="#262626" stroke-width="1">
<line x1="75" y1="168.74" x2="82" y2="168.74"/>
<line x1="75" y1="229.48" x2="82" y2="229.48"/>
<line x1="75" y1="290.22" x2="82" y2="290.22"/>
<line x1="75" y1="350.96" x2="82" y2="350.96"/>
<line x1="75" y1="411.70" x2="82" y2="411.70"/>
<line x1="75" y1="472.44" x2="82" y2="472.44"/>
<line x1="75" y1="533.18" x2="82" y2="533.18"/>
<line x1="75" y1="593.92" x2="82" y2="593.92"/>
<line x1="75" y1="654.66" x2="82" y2="654.66"/>
</g>
<g font-family="Liberation Sans" font-size="12" fill="#262626">
<text x="69" y="111.0" text-anchor="end">0</text>
<text x="69" y="172.7" text-anchor="end">-500</text>
<text x="69" y="233.5" text-anchor="end">-1000</text>
<text x="69" y="294.2" text-anchor="end">-1500</text>
<text x="69" y="355.0" text-anchor="end">-2000</text>
<text x="69" y="415.7" text-anchor="end">-2500</text>
<text x="69" y="476.4" text-anchor="end">-3000</text>
<text x="69" y="537.2" text-anchor="end">-3500</text>
<text x="69" y="597.9" text-anchor="end">-4000</text>
<text x="69" y="658.7" text-anchor="end">-4500</text>
<text x="69" y="719.5" text-anchor="end">-5000</text>
<text x="74.0" y="731" text-anchor="middle">0</text>
<text x="227.0" y="731" text-anchor="middle">50</text>
<text x="380.0" y="731" text-anchor="middle">100</text>
<text x="533.0" y="731" text-anchor="middle">150</text>
<text x="686.0" y="731" text-anchor="middle">200</text>
<text x="839.0" y="731" text-anchor="middle">250</text>
</g>
<text x="420.6" y="746" font-family="Liberation Sans" font-size="13.7" fill="#262626" textLength="96.8" lengthAdjust="spacingAndGlyphs">Episode Number</text>
<text transform="translate(32.6 411) rotate(-90)" x="-47.7" font-family="Liberation Sans" font-size="13.7" fill="#262626" textLength="95.4" lengthAdjust="spacingAndGlyphs">Episode Reward</text>
<text x="226.8" y="101.7" font-family="Liberation Sans" font-size="14" font-weight="bold" fill="#1a1a1a" textLength="484.5" lengthAdjust="spacingAndGlyphs">Episode reward for SimplePendlumWithImageDiscreteAction with rlDQNAgent</text>
</svg>

<!-- RIGHT PANEL -->

<!-- progress bar -->
<div class="a" style="left:899px;top:69px;width:156px;height:15px;background:#fff"></div>
<div class="a" style="left:899px;top:69px;width:8px;height:15px;background:#0072c6"></div>
<div class="btn" style="left:1065px;top:64px;width:110px;height:25px;border-color:#c4c4c4;background:#f4f4f4;color:#a3a3a3;line-height:22px">Training stopped</div>

<div class="lbl" style="left:899px;top:100px">Episode number:</div>
<div class="lbl" style="left:1027px;top:100px">257/5000</div>
<div class="lbl" style="left:899px;top:125px">Start time:</div>
<div class="lbl" style="left:1027px;top:125px">13-Nov-2022 15:41:23</div>
<div class="lbl" style="left:899px;top:150px">Duration:</div>
<div class="lbl" style="left:1027px;top:150px">02:40:32</div>
<div class="lbl" style="left:899px;top:175px">Final result:</div>
<div class="lbl" style="left:1027px;top:175px;line-height:14.6px">Training finished after all<br>agents reached stop<br>training criteria.</div>

<!-- Training information panel -->
<div class="a" style="left:899px;top:230px;width:276px;height:270px;border:1px solid #8a8a8a"></div>
<div class="a" style="left:900px;top:250px;width:274px;height:1px;background:#8a8a8a"></div>
<div class="lbl" style="left:903px;top:233px;font-weight:bold">Training Information</div>
<div class="a" style="left:910px;top:261px;width:254px;height:95px;border:1px solid #8a8a8a;background:#fff"></div>
<div class="a" style="left:911px;top:262px;width:252px;height:27px;background:#f4f4f4;border-bottom:1px solid #8a8a8a"></div>
<div class="a" style="left:911px;top:289px;width:252px;height:23px;background:#0070c0;border-bottom:1px solid #8a8a8a"></div>
<div class="a" style="left:1037px;top:262px;width:1px;height:50px;background:#8a8a8a"></div>
<div class="lbl" style="left:914px;top:268px;font-weight:bold">Agent</div>
<div class="lbl" style="left:1041.5px;top:268px;font-weight:bold">Status</div>
<div class="lbl" style="left:914px;top:292px;color:#fff">rlDQNAgent</div>
<div class="lbl" style="left:1041px;top:292px;color:#fff">Training finished</div>

<div class="lbl" style="left:910px;top:367px;font-weight:bold">Episode Information (rlDQNAgent):</div>
<div class="lbl" style="left:910px;top:392px">Episode reward:</div>
<div class="lbl" style="left:1028px;top:392px">-1051.1428</div>
<div class="lbl" style="left:910px;top:417px">Average reward:</div>
<div class="lbl" style="left:1028px;top:417px">-980.0106</div>
<div class="lbl" style="left:910px;top:442px">Episode Q0:</div>
<div class="lbl" style="left:1028px;top:442px">-493.8603</div>
<div class="btn" style="left:1054px;top:466px;width:110px;height:23px;line-height:21px;color:#212121">More Details...</div>

<!-- Plot options -->
<div class="a" style="left:899px;top:510px;width:276px;height:89px;border:1px solid #8a8a8a"></div>
<div class="a" style="left:900px;top:530px;width:274px;height:1px;background:#8a8a8a"></div>
<div class="lbl" style="left:903px;top:513px;font-weight:bold">Plot Options</div>
<div class="a" style="left:910px;top:541px;width:14px;height:14px;border:1px solid #333;background:#fff"></div>
<svg class="a" style="left:910px;top:541px" width="14" height="14" viewBox="0 0 14 14"><path d="M2.5 7 L5.5 10.3 L11.3 3.2" fill="none" stroke="#111" stroke-width="2"/></svg>
<div class="lbl" style="left:927px;top:541px">Show EpisodeQ0</div>
<div class="a" style="left:910px;top:570px;width:14px;height:14px;border:1px solid #333;background:#fff"></div>
<div class="lbl" style="left:927px;top:569px">Show last N episodes</div>
<div class="a" style="left:1054px;top:566px;width:110px;height:22px;border:1px solid #d6d6d6;background:#f0f0f0"></div>
<div class="lbl" style="left:1054px;top:570px;width:105px;text-align:right;color:#a8a8a8">5000</div>

<!-- Legend -->
<div class="a" style="left:899px;top:609px;width:276px;height:57px;border:1px solid #8a8a8a"></div>
<div class="a" style="left:905px;top:615px;width:264px;height:45px;background:#fff"></div>
<svg class="a" style="left:900px;top:615px" width="270" height="45" viewBox="0 0 270 45" shape-rendering="crispEdges">
 <rect x="12" y="14" width="40" height="1" fill="#a6dcf6"/><rect x="31" y="13" width="3" height="3" fill="#a6dcf6"/>
 <rect x="150" y="14" width="40" height="1" fill="#EDB120"/><rect x="169" y="13" width="3" height="3" fill="#EDB120"/>
 <rect x="12" y="28" width="40" height="1" fill="#0072BD"/><rect x="31" y="27" width="3" height="3" fill="#0072BD"/>
</svg>
<div class="lbl" style="left:955px;top:622px;font-size:12.4px">Episode reward</div>
<div class="lbl" style="left:1093px;top:622px;font-size:12.4px">Episode Q0</div>
<div class="lbl" style="left:955px;top:637px;font-size:12.4px">Average reward</div>

<!-- status bar icon -->
<svg class="a" style="left:1167px;top:775px" width="14" height="12" viewBox="0 0 14 12"><path d="M1 1 L8 6 L1 11 Z" fill="#9a9a9a"/><rect x="10" y="1" width="2" height="10" fill="#9a9a9a"/></svg>



<!-- window borders -->
<div class="a" style="left:0;top:0;width:82px;height:1px;background:#111722"></div>
<div class="a" style="left:82px;top:0;width:1104px;height:1px;background:#5e5e5e"></div>
<div class="a" style="left:0;top:0;width:1px;height:793px;background:#1a1f28"></div>
<div class="a" style="left:1185px;top:0;width:1px;height:793px;background:#626262"></div>
<div class="a" style="left:1px;top:791px;width:1184px;height:1px;background:#efefef"></div>
<div class="a" style="left:0;top:792px;width:446px;height:1px;background:#141a23"></div>
<div class="a" style="left:446px;top:792px;width:740px;height:1px;background:#6a6a6a"></div>
</body></html>
